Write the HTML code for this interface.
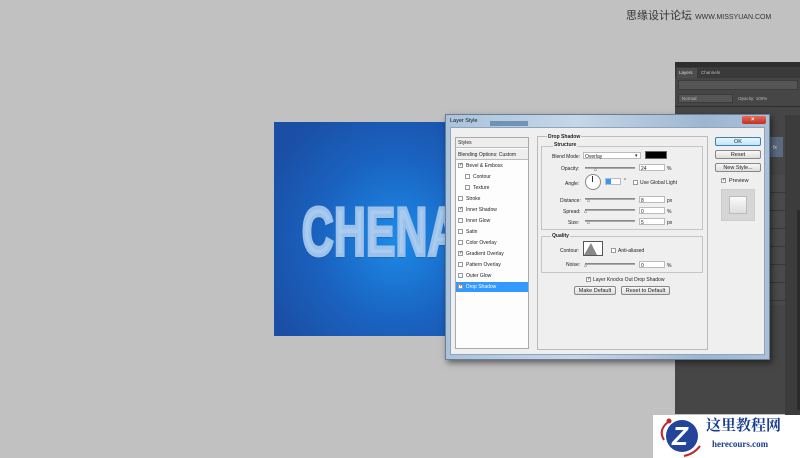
<!DOCTYPE html>
<html><head><meta charset="utf-8"><style>
*{margin:0;padding:0;box-sizing:border-box}
body{width:800px;height:458px;background:#c1c1c1;position:relative;overflow:hidden;font-family:"Liberation Sans",sans-serif;font-size:5px;color:#222}
.a{position:absolute}
.t{position:absolute;font-size:5px;white-space:nowrap;line-height:6px}
.cb{position:absolute;width:5px;height:5px;border:1px solid #999;background:#fff;font-size:5px;line-height:3px;text-align:center;color:#333}
.in{position:absolute;background:#fff;border:1px solid #bbb;height:7px}
.sl{position:absolute;height:2px;background:#aaa;border-top:1px solid #888}
.btn{position:absolute;border:1px solid #888;background:linear-gradient(#f8f8f8,#ddd);border-radius:2px;font-size:5.5px;text-align:center;line-height:8px}
</style></head><body>
<div class="t" style="left:626px;top:10px;font-size:11px;line-height:12px;color:#333;font-family:'Liberation Sans','Noto Sans CJK SC',sans-serif">思缘设计论坛 <span style="font-size:7px">WWW.MISSYUAN.COM</span></div>

<!-- canvas -->
<div class="a" style="left:274px;top:122px;width:175px;height:214px;overflow:hidden;background:radial-gradient(ellipse 80% 70% at 70% 55%,#1d8ae8,#1a63c0 55%,#1a4fa5)">
<div class="t" style="left:28px;top:70px;font-size:68px;line-height:80px;font-weight:bold;color:#a8cbef;letter-spacing:1px;transform:scaleX(0.64);transform-origin:left;-webkit-text-stroke:4px #9cc2eb;text-shadow:0 2px 2px #0d3d8a">CHENA</div>
</div>

<!-- right panel -->
<div class="a" style="left:675px;top:62px;width:125px;height:352px;background:#464646"></div>
<div class="a" style="left:675px;top:62px;width:125px;height:5px;background:#2e2e2e"></div>
<div class="a" style="left:675px;top:67px;width:125px;height:11px;background:#3a3a3a"></div>
<div class="a" style="left:677px;top:68px;width:20px;height:10px;background:#4d4d4d"></div>
<div class="t" style="left:679px;top:70px;color:#ddd;font-size:4.5px">Layers</div>
<div class="t" style="left:701px;top:70px;color:#bbb;font-size:4.5px">Channels</div>
<div class="a" style="left:678px;top:80px;width:120px;height:10px;background:#555;border:1px solid #3b3b3b"></div>
<div class="a" style="left:678px;top:94px;width:55px;height:9px;background:#555;border:1px solid #3b3b3b"></div>
<div class="t" style="left:682px;top:96px;color:#bbb;font-size:4.5px">Normal</div>
<div class="t" style="left:738px;top:96px;color:#bbb;font-size:4.5px">Opacity: 100%</div>
<div class="a" style="left:675px;top:106px;width:125px;height:1px;background:#2e2e2e"></div>
<div class="a" style="left:768px;top:137px;width:15px;height:20px;background:#5b6a80"></div>
<div class="t" style="left:773px;top:145px;color:#ddd">fx</div>
<div class="a" style="left:785px;top:115px;width:15px;height:300px;background:#3c3c3c"></div>
<div class="a" style="left:768px;top:175px;width:17px;height:130px;background:repeating-linear-gradient(#4a4a4a 0 17px,#383838 17px 18px)"></div>
<div class="a" style="left:797px;top:210px;width:3px;height:200px;background:#2a2a2a"></div>

<!-- dialog -->
<div class="a" style="left:445px;top:114px;width:325px;height:246px;background:linear-gradient(90deg,#a9c3dc,#c5d7e8 40%,#9db6d0 80%,#a9c0d8);border:1px solid #6b7d90;box-shadow:2px 3px 6px rgba(0,0,0,.5)"></div>
<div class="a" style="left:490px;top:121px;width:38px;height:5px;background:#3f6a9d;opacity:.6"></div>
<div class="t" style="left:450px;top:118px;color:#111;font-size:5.5px">Layer Style</div>
<div class="a" style="left:742px;top:116px;width:24px;height:8px;background:linear-gradient(#e46a5a,#c3311f);border-radius:2px"></div>
<div class="t" style="left:751px;top:117px;color:#fff;font-size:6px;font-weight:bold">×</div>
<div class="a" style="left:450px;top:127px;width:315px;height:228px;background:#efefef;border:1px solid #8fa4bb"></div>

<!-- left list -->
<div class="a" style="left:455px;top:137px;width:74px;height:212px;background:#fdfdfd;border:1px solid #aaa"></div>
<div class="a" style="left:456px;top:138px;width:72px;height:10px;background:#eee;border-bottom:1px solid #bbb"></div>
<div class="t" style="left:458px;top:140px">Styles</div>
<div class="a" style="left:456px;top:149px;width:72px;height:11px;background:#eee;border-bottom:1px solid #bbb"></div>
<div class="t" style="left:458px;top:152px">Blending Options: Custom</div>
<div class="a" style="left:456px;top:282px;width:72px;height:10px;background:#3399ff"></div>

<div class="cb" style="left:458px;top:163px">✓</div><div class="t" style="left:466px;top:163px">Bevel &amp; Emboss</div>
<div class="cb" style="left:465px;top:174px"></div><div class="t" style="left:473px;top:174px">Contour</div>
<div class="cb" style="left:465px;top:185px"></div><div class="t" style="left:473px;top:185px">Texture</div>
<div class="cb" style="left:458px;top:196px"></div><div class="t" style="left:466px;top:196px">Stroke</div>
<div class="cb" style="left:458px;top:207px">✓</div><div class="t" style="left:466px;top:207px">Inner Shadow</div>
<div class="cb" style="left:458px;top:218px"></div><div class="t" style="left:466px;top:218px">Inner Glow</div>
<div class="cb" style="left:458px;top:229px"></div><div class="t" style="left:466px;top:229px">Satin</div>
<div class="cb" style="left:458px;top:240px"></div><div class="t" style="left:466px;top:240px">Color Overlay</div>
<div class="cb" style="left:458px;top:251px">✓</div><div class="t" style="left:466px;top:251px">Gradient Overlay</div>
<div class="cb" style="left:458px;top:262px"></div><div class="t" style="left:466px;top:262px">Pattern Overlay</div>
<div class="cb" style="left:458px;top:273px"></div><div class="t" style="left:466px;top:273px">Outer Glow</div>
<div class="cb" style="left:458px;top:284px">✓</div><div class="t" style="left:466px;top:284px;color:#fff">Drop Shadow</div>

<!-- middle -->
<div class="a" style="left:537px;top:136px;width:171px;height:214px;border:1px solid #bbb"></div>
<div class="t" style="left:547px;top:134px;font-weight:bold;background:#efefef;padding:0 1px">Drop Shadow</div>
<div class="a" style="left:541px;top:146px;width:162px;height:84px;border:1px solid #c5c5c5"></div>
<div class="t" style="left:553px;top:142px;font-weight:bold;background:#efefef;padding:0 1px">Structure</div>
<div class="t" style="left:552px;top:154px">Blend Mode:</div>
<div class="in" style="left:583px;top:152px;width:58px"></div><div class="t" style="left:585px;top:154px">Overlay</div><div class="t" style="left:635px;top:153px">▾</div>
<div class="a" style="left:645px;top:151px;width:22px;height:8px;background:#000;border:1px solid #666"></div>
<div class="t" style="left:561px;top:166px">Opacity:</div>
<div class="sl" style="left:585px;top:167px;width:50px"></div><div class="t" style="left:594px;top:167px">⌂</div>
<div class="in" style="left:639px;top:164px;width:26px"></div><div class="t" style="left:641px;top:166px">24</div><div class="t" style="left:667px;top:166px">%</div>
<div class="t" style="left:565px;top:181px">Angle:</div>
<div class="a" style="left:585px;top:174px;width:16px;height:16px;border-radius:50%;background:#fff;border:1px solid #888"></div>
<div class="a" style="left:592px;top:176px;width:1px;height:6px;background:#333"></div>
<div class="in" style="left:605px;top:178px;width:16px"></div><div class="a" style="left:606px;top:179px;width:5px;height:5px;background:#3399ff"></div>
<div class="t" style="left:624px;top:178px">°</div>
<div class="cb" style="left:633px;top:180px"></div><div class="t" style="left:640px;top:180px">Use Global Light</div>
<div class="t" style="left:560px;top:198px">Distance:</div>
<div class="sl" style="left:585px;top:198px;width:50px"></div><div class="t" style="left:587px;top:198px">⌂</div>
<div class="in" style="left:639px;top:196px;width:26px"></div><div class="t" style="left:641px;top:198px">8</div><div class="t" style="left:667px;top:198px">px</div>
<div class="t" style="left:563px;top:209px">Spread:</div>
<div class="sl" style="left:585px;top:209px;width:50px"></div><div class="t" style="left:584px;top:209px">⌂</div>
<div class="in" style="left:639px;top:207px;width:26px"></div><div class="t" style="left:641px;top:209px">0</div><div class="t" style="left:667px;top:209px">%</div>
<div class="t" style="left:568px;top:220px">Size:</div>
<div class="sl" style="left:585px;top:220px;width:50px"></div><div class="t" style="left:587px;top:220px">⌂</div>
<div class="in" style="left:639px;top:218px;width:26px"></div><div class="t" style="left:641px;top:220px">5</div><div class="t" style="left:667px;top:220px">px</div>

<div class="a" style="left:541px;top:236px;width:162px;height:37px;border:1px solid #c5c5c5"></div>
<div class="t" style="left:551px;top:233px;font-weight:bold;background:#efefef;padding:0 1px">Quality</div>
<div class="t" style="left:560px;top:248px">Contour:</div>
<div class="a" style="left:583px;top:241px;width:20px;height:15px;background:#fff;border:1px solid #555"></div>
<svg class="a" style="left:584px;top:242px" width="14" height="13"><path d="M0 13 L7 1 L13 13Z" fill="#888"/></svg>
<div class="cb" style="left:611px;top:248px"></div><div class="t" style="left:618px;top:248px">Anti-aliased</div>
<div class="t" style="left:566px;top:262px">Noise:</div>
<div class="sl" style="left:585px;top:263px;width:50px"></div><div class="t" style="left:584px;top:263px">⌂</div>
<div class="in" style="left:639px;top:261px;width:26px"></div><div class="t" style="left:641px;top:263px">0</div><div class="t" style="left:667px;top:263px">%</div>
<div class="cb" style="left:586px;top:277px">✓</div><div class="t" style="left:593px;top:277px">Layer Knocks Out Drop Shadow</div>
<div class="btn" style="left:574px;top:286px;width:42px;height:9px">Make Default</div>
<div class="btn" style="left:621px;top:286px;width:49px;height:9px">Reset to Default</div>

<!-- right buttons -->
<div class="btn" style="left:715px;top:137px;width:46px;height:9px;border-color:#3c7fb1;background:linear-gradient(#eaf6fd,#bee6fd)">OK</div>
<div class="btn" style="left:715px;top:150px;width:46px;height:9px">Reset</div>
<div class="btn" style="left:715px;top:163px;width:46px;height:9px">New Style...</div>
<div class="cb" style="left:721px;top:178px">✓</div><div class="t" style="left:729px;top:178px;font-size:5.5px">Preview</div>
<div class="a" style="left:721px;top:189px;width:34px;height:32px;background:#d6d6d6;border:1px solid #ccc"></div>
<div class="a" style="left:729px;top:196px;width:18px;height:18px;background:linear-gradient(#fafafa,#ddd);border:1px solid #bbb"></div>

<!-- watermark -->
<div class="a" style="left:653px;top:415px;width:147px;height:43px;background:#fff"></div>
<div class="a" style="left:666px;top:420px;width:32px;height:32px;border-radius:50%;background:#24449a"></div>
<div class="t" style="left:672px;top:422px;font-size:26px;line-height:28px;font-weight:bold;color:#fff;font-style:italic">Z</div>
<svg class="a" style="left:654px;top:416px" width="50" height="42"><path d="M14 6 Q4 14 10 24 M30 40 Q40 38 46 30" stroke="#c0282d" stroke-width="2" fill="none"/><circle cx="15" cy="5" r="2.5" fill="#c0282d"/></svg>
<div class="t" style="left:706px;top:418px;font-size:15px;line-height:17px;font-weight:bold;color:#1b3e8f;font-family:'Liberation Serif','Noto Serif CJK SC',serif">这里教程网</div>
<div class="t" style="left:712px;top:439px;font-size:9px;line-height:10px;font-weight:bold;color:#1b3e8f;font-family:'Liberation Serif',serif">herecours.com</div>
</body></html>
